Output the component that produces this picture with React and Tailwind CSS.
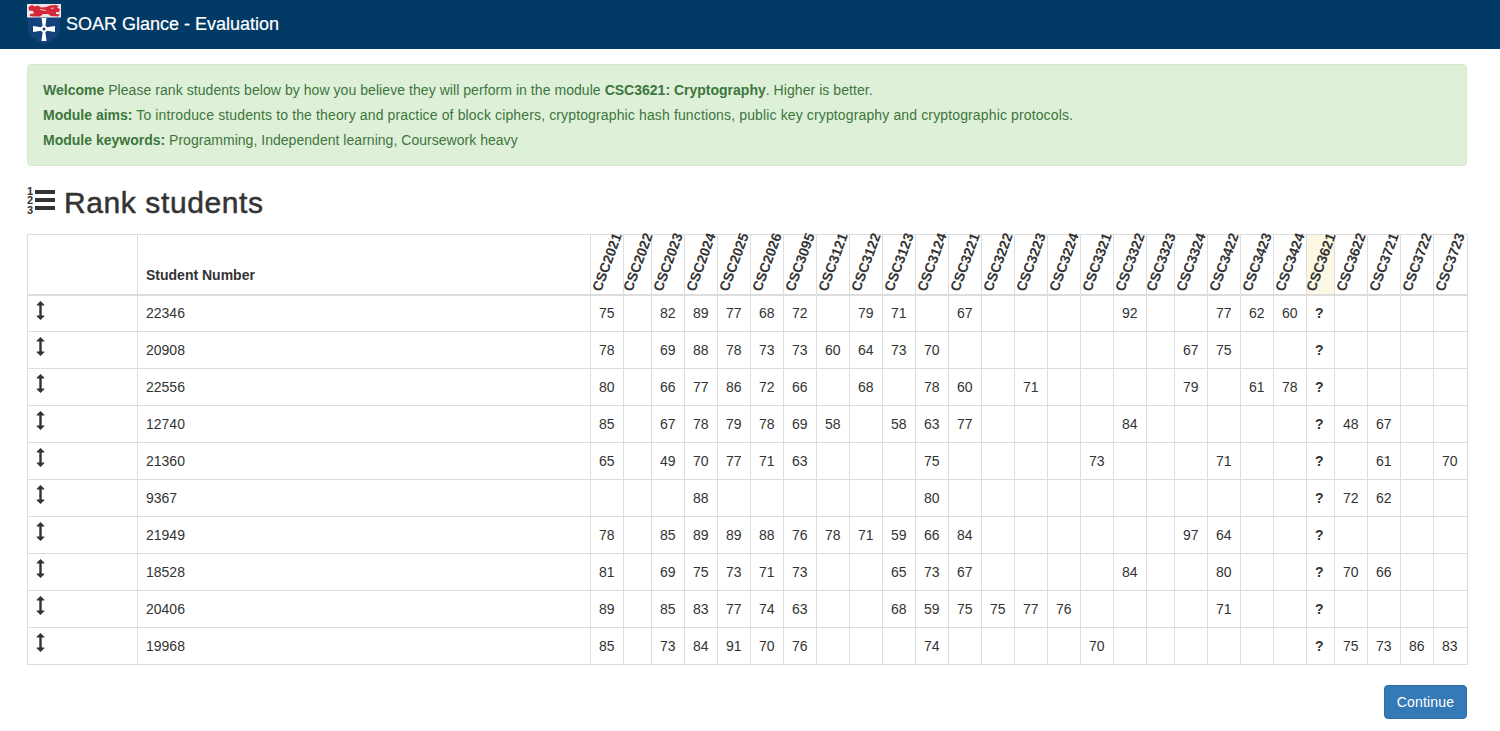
import React from 'react';

const modules = [
  ['CSC2021', 33], ['CSC2022', 28], ['CSC2023', 33], ['CSC2024', 33], ['CSC2025', 33], ['CSC2026', 33],
  ['CSC3095', 33], ['CSC3121', 33], ['CSC3122', 33], ['CSC3123', 33], ['CSC3124', 33], ['CSC3221', 33],
  ['CSC3222', 33], ['CSC3223', 33], ['CSC3224', 33], ['CSC3321', 33], ['CSC3322', 33], ['CSC3323', 28],
  ['CSC3324', 33], ['CSC3422', 33], ['CSC3423', 33], ['CSC3424', 33], ['CSC3621', 28], ['CSC3622', 33],
  ['CSC3721', 33], ['CSC3722', 33], ['CSC3723', 34],
];

const students = [
  { id: 22346, marks: { CSC2021: 75, CSC2023: 82, CSC2024: 89, CSC2025: 77, CSC2026: 68, CSC3095: 72, CSC3122: 79, CSC3123: 71, CSC3221: 67, CSC3322: 92, CSC3422: 77, CSC3423: 62, CSC3424: 60 } },
  { id: 20908, marks: { CSC2021: 78, CSC2023: 69, CSC2024: 88, CSC2025: 78, CSC2026: 73, CSC3095: 73, CSC3121: 60, CSC3122: 64, CSC3123: 73, CSC3124: 70, CSC3324: 67, CSC3422: 75 } },
  { id: 22556, marks: { CSC2021: 80, CSC2023: 66, CSC2024: 77, CSC2025: 86, CSC2026: 72, CSC3095: 66, CSC3122: 68, CSC3124: 78, CSC3221: 60, CSC3223: 71, CSC3324: 79, CSC3423: 61, CSC3424: 78 } },
  { id: 12740, marks: { CSC2021: 85, CSC2023: 67, CSC2024: 78, CSC2025: 79, CSC2026: 78, CSC3095: 69, CSC3121: 58, CSC3123: 58, CSC3124: 63, CSC3221: 77, CSC3322: 84, CSC3622: 48, CSC3721: 67 } },
  { id: 21360, marks: { CSC2021: 65, CSC2023: 49, CSC2024: 70, CSC2025: 77, CSC2026: 71, CSC3095: 63, CSC3124: 75, CSC3321: 73, CSC3422: 71, CSC3721: 61, CSC3723: 70 } },
  { id: 9367, marks: { CSC2024: 88, CSC3124: 80, CSC3622: 72, CSC3721: 62 } },
  { id: 21949, marks: { CSC2021: 78, CSC2023: 85, CSC2024: 89, CSC2025: 89, CSC2026: 88, CSC3095: 76, CSC3121: 78, CSC3122: 71, CSC3123: 59, CSC3124: 66, CSC3221: 84, CSC3324: 97, CSC3422: 64 } },
  { id: 18528, marks: { CSC2021: 81, CSC2023: 69, CSC2024: 75, CSC2025: 73, CSC2026: 71, CSC3095: 73, CSC3123: 65, CSC3124: 73, CSC3221: 67, CSC3322: 84, CSC3422: 80, CSC3622: 70, CSC3721: 66 } },
  { id: 20406, marks: { CSC2021: 89, CSC2023: 85, CSC2024: 83, CSC2025: 77, CSC2026: 74, CSC3095: 63, CSC3123: 68, CSC3124: 59, CSC3221: 75, CSC3222: 75, CSC3223: 77, CSC3224: 76, CSC3422: 71 } },
  { id: 19968, marks: { CSC2021: 85, CSC2023: 73, CSC2024: 84, CSC2025: 91, CSC2026: 70, CSC3095: 76, CSC3124: 74, CSC3321: 70, CSC3622: 75, CSC3721: 73, CSC3722: 86, CSC3723: 83 } },
];

const TARGET = 'CSC3621';

const Crest = () => (
  <svg width="34" height="41" viewBox="0 0 34 41" className="shrink-0">
    <path d="M1 13 H33 V26 C33 32 25 37 17 40 C9 37 1 32 1 26 Z" fill="#14437c" />
    <rect x="0" y="0" width="34" height="13.5" fill="#ece4e8" />
    {/* lion */}
    <path d="M1.5 3 L5 1 L8 2.5 L11 1.5 L14 3.5 L19 3 L23 1.5 L28 1 L32 2 L30 3.5 L33 5 L32 8 L29 8 L29 10 L33 10.5 L31 12.5 L24 12 L21 10 L16 10 L13 12.5 L7 12.5 L3 12 L3 10 L7 9.5 L6 7 L2 6.5 Z" fill="#d62839" />
    <path d="M13 5.5 L19 6.5 M24 4.5 L27 4" stroke="#ece4e8" strokeWidth="0.8" fill="none" />
    {/* cross */}
    <path d="M14.5 14 H19.5 L18.2 23.4 L28 22 V28 L18.2 26.6 L19.5 37 H14.5 L15.8 26.6 L6 28 V22 L15.8 23.4 Z" fill="#fff" />
    <circle cx="17" cy="25" r="3.2" fill="#fff" />
    <circle cx="17" cy="25" r="1.5" fill="#14437c" />
  </svg>
);

const ListOl = () => (
  <svg width="29" height="30" viewBox="0 0 29 30" className="shrink-0 overflow-visible fill-[#333]">
    <text x="0" y="6.5" fontSize="11" fontWeight="700" fontFamily="Liberation Sans, sans-serif">1</text>
    <text x="0" y="16" fontSize="11" fontWeight="700" fontFamily="Liberation Sans, sans-serif">2</text>
    <text x="0" y="25.5" fontSize="11" fontWeight="700" fontFamily="Liberation Sans, sans-serif">3</text>
    <rect x="8" y="2" width="20" height="4" />
    <rect x="8" y="10" width="20" height="4" />
    <rect x="8" y="18" width="20" height="4" />
  </svg>
);

const DragHandle = () => (
  <svg width="9" height="19" viewBox="0 0 9 19" className="fill-[#333]">
    <path d="M4.5 0 L8.3 3.8 Q8.7 4.6 8 4.6 H5.7 V14.4 H8 Q8.7 14.4 8.3 15.2 L4.5 19 L0.7 15.2 Q0.3 14.4 1 14.4 H3.3 V4.6 H1 Q0.3 4.6 0.7 3.8 Z" />
  </svg>
);

export default function App() {
  return (
    <div className="min-h-[731px] bg-white font-['Liberation_Sans',Arial,sans-serif] text-[14px] text-[#333]">
      {/* Top bar */}
      <div className="flex h-[49px] items-center bg-[#003a65] pl-[27px]">
        <Crest />
        <span className="ml-[5px] text-[18px] text-white [-webkit-text-stroke:0.2px_white]">SOAR Glance - Evaluation</span>
      </div>

      <div className="ml-[27px] w-[1440px]">
        <div className="mt-[15px] rounded border border-[#d6e9c6] bg-[#dff0d8] px-[15px] pt-[13px] pb-[12px] leading-[25px] text-[#3c763d]">
          <p className="tracking-[0.06px]">
            <b className="tracking-normal">Welcome</b> Please rank students below by how you believe they will perform in the module{' '}
            <b className="tracking-normal">CSC3621: Cryptography</b>. Higher is better.
          </p>
          <p className="tracking-[0.135px]">
            <b className="tracking-normal">Module aims:</b> To introduce students to the theory and practice of block ciphers, cryptographic hash
            functions, public key cryptography and cryptographic protocols.
          </p>
          <p className="tracking-[0.03px]">
            <b className="tracking-normal">Module keywords:</b> Programming, Independent learning, Coursework heavy
          </p>
        </div>

        <h2 className="mt-[20px] mb-[15px] flex h-[33px] items-center gap-[8px] text-[30px] leading-[33px] tracking-[0.6px] [-webkit-text-stroke:0.5px_#333]">
          <ListOl />
          Rank students
        </h2>

        <table className="w-[1440px] table-fixed border-collapse">
          <colgroup>
            <col className="w-[110px]" />
            <col className="w-[453px]" />
            {modules.map(([name, width]) => (
              <col key={name} style={{ width }} />
            ))}
          </colgroup>
          <thead>
            <tr className="h-[60px]">
              <th className="border border-b-2 border-[#ddd]"></th>
              <th className="border border-b-2 border-[#ddd] px-[8px] pb-[8px] text-left align-bottom font-bold">
                Student Number
              </th>
              {modules.map(([name, width]) => (
                <th
                  key={name}
                  className={`relative border border-b-2 border-[#ddd] p-0 ${name === TARGET ? 'bg-[#fcf8e3]' : ''}`}
                >
                  <span
                    className={`absolute bottom-[1px] origin-bottom-left -rotate-[70deg] whitespace-nowrap leading-[14px] font-bold ${
                      width === 28 ? 'left-[10px]' : 'left-[12px]'
                    }`}
                  >
                    {name}
                  </span>
                </th>
              ))}
            </tr>
          </thead>
          <tbody>
            {students.map((student) => (
              <tr key={student.id} className="h-[37px]">
                <td className="border border-[#ddd] px-[8px] pt-[5px] align-top">
                  <DragHandle />
                </td>
                <td className="border border-[#ddd] px-[8px]">{student.id}</td>
                {modules.map(([name]) => (
                  <td key={name} className="border border-[#ddd] px-[8px]">
                    {name === TARGET ? <b>?</b> : student.marks[name]}
                  </td>
                ))}
              </tr>
            ))}
          </tbody>
        </table>

        <div className="mt-[20px] flex justify-end">
          <button className="h-[34px] w-[83px] rounded border border-[#2e6da4] bg-[#337ab7] tracking-[0.2px] text-white">Continue</button>
        </div>
      </div>
    </div>
  );
}
